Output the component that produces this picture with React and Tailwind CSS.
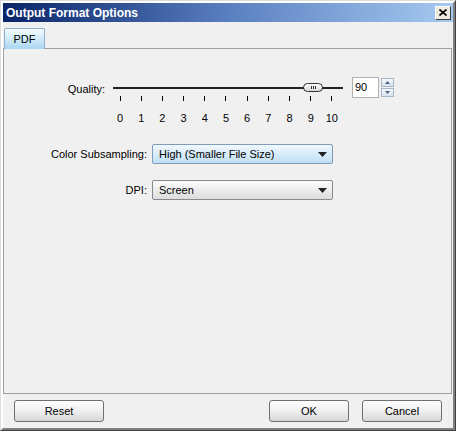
import React from "react";

function Ticks() {
  const nums = [0, 1, 2, 3, 4, 5, 6, 7, 8, 9, 10];
  return (
    <div className="flex justify-between w-[222px]">
      {nums.map((n) => (
        <div key={n} className="flex flex-col items-center w-[10px]">
          <div className="w-px h-[5px] bg-[#000]" />
          <div className="mt-[11px] text-[11px] leading-[12px] text-black">{n}</div>
        </div>
      ))}
    </div>
  );
}

function Combo({ text, blue }) {
  return (
    <div
      className={
        "w-[181px] h-[20px] border rounded-[2px] flex items-center justify-between pl-[6px] pr-[5px] " +
        (blue
          ? "border-[#7f9db9] bg-gradient-to-b from-[#f2f8fd] via-[#d8ecfa] to-[#bfdff5]"
          : "bg-gradient-to-b from-[#fbfbfb] via-[#ececec] to-[#dcdcdc] border-[#8a8a8a]")
      }
    >
      <span className="text-[11px] leading-none text-black">{text}</span>
      <svg width="9" height="5" viewBox="0 0 9 5">
        <path d="M0 0 H9 L4.5 5 Z" fill="#222" />
      </svg>
    </div>
  );
}

function Btn({ children, w }) {
  return (
    <div
      className={
        "h-[22px] border border-[#707070] rounded-[3px] bg-gradient-to-b from-[#fdfdfd] via-[#efefef] to-[#d6d6d6] flex items-center justify-center text-[11px] text-black " +
        w
      }
    >
      {children}
    </div>
  );
}

export default function App() {
  return (
    <div
      className="w-[456px] h-[431px] bg-[#f0f0f0] border border-t-[#dcdcdc] border-l-[#dcdcdc] border-r-[#404040] border-b-[#404040] flex flex-col"
      style={{ fontFamily: '"Liberation Sans", Arial, sans-serif' }}
    >
      <div className="border-[2px] border-t-[#ffffff] border-l-[#ffffff] border-r-[#808080] border-b-[#808080] flex flex-col flex-1 min-h-0">
        {/* Title bar */}
        <div className="h-[19px] bg-gradient-to-r from-[#0a246a] via-[#5a7fc0] to-[#a6caf0] flex items-center justify-between pl-[3px] pr-[2px]">
          <span className="text-white font-bold text-[12px] leading-none">Output Format Options</span>
          <div className="w-[16px] h-[14px] bg-[#ece9e0] border border-t-[#fff] border-l-[#fff] border-r-[#404040] border-b-[#404040] flex items-center justify-center">
            <svg width="8" height="7" viewBox="0 0 8 7">
              <path d="M0.5 0.5 L7.5 6.5 M7.5 0.5 L0.5 6.5" stroke="#000" strokeWidth="1.6" />
            </svg>
          </div>
        </div>

        {/* Tabs */}
        <div className="flex flex-col flex-1 min-h-0 px-0 pt-[6px]">
          <div className="flex pl-[1px]">
            <div className="w-[41px] h-[21px] border border-b-0 border-[#8fb0c8] rounded-t-[2px] bg-gradient-to-b from-[#f4fbff] via-[#cfeaf9] to-[#a9d6f1] flex items-center justify-center text-[11px] text-black -mb-px relative">
              PDF
            </div>
          </div>
          <div className="h-[346px] border border-[#a0a0a0] mr-[1px] flex flex-col">
            {/* Quality row */}
            <div className="flex items-start mt-[28px]">
              <div className="w-[103px] text-right pr-[2px] text-[11px] leading-none mt-[7px]">Quality:</div>
              <div className="ml-[6px] flex flex-col w-[230px]">
                <div className="relative h-[14px] flex items-center mt-[4px]">
                  <div className="w-full h-[2px] bg-[#222]" />
                  <div className="absolute left-[190px] top-[2px] w-[20px] h-[9px] rounded-[5px] border border-[#333] bg-gradient-to-b from-[#ffffff] to-[#d8d8d8] flex items-center justify-center gap-[1px]">
                    <div className="w-px h-[3px] bg-[#333]" />
                    <div className="w-px h-[3px] bg-[#333]" />
                    <div className="w-px h-[3px] bg-[#333]" />
                  </div>
                </div>
                <div className="pl-[2px] mt-[1px]">
                  <Ticks />
                </div>
              </div>
              <div className="ml-[9px] flex items-start">
                <div className="w-[27px] h-[21px] bg-white border border-[#b0b0b0] flex items-center pl-[2px] text-[11px]">90</div>
                <div className="ml-[2px] flex flex-col gap-[1px] mt-[1px]">
                  <div className="w-[13px] h-[9px] border border-[#a5b7c9] bg-gradient-to-b from-[#f4f8fc] to-[#d5e2ee] flex items-center justify-center">
                    <svg width="5" height="3" viewBox="0 0 5 3"><path d="M0 3 H5 L2.5 0 Z" fill="#4d6185" /></svg>
                  </div>
                  <div className="w-[13px] h-[9px] border border-[#a5b7c9] bg-gradient-to-b from-[#f4f8fc] to-[#d5e2ee] flex items-center justify-center">
                    <svg width="5" height="3" viewBox="0 0 5 3"><path d="M0 0 H5 L2.5 3 Z" fill="#4d6185" /></svg>
                  </div>
                </div>
              </div>
            </div>

            {/* Color subsampling */}
            <div className="flex items-center mt-[20px]">
              <div className="w-[143px] text-right text-[11px] leading-none">Color Subsampling:</div>
              <div className="ml-[5px]">
                <Combo text="High (Smaller File Size)" blue />
              </div>
            </div>

            {/* DPI */}
            <div className="flex items-center mt-[16px]">
              <div className="w-[143px] text-right text-[11px] leading-none">DPI:</div>
              <div className="ml-[5px]">
                <Combo text="Screen" />
              </div>
            </div>
          </div>

          {/* Buttons */}
          <div className="flex items-center justify-between pl-[11px] pr-[11px] mt-[6px]">
            <Btn w="w-[90px]">Reset</Btn>
            <div className="flex gap-[13px]">
              <Btn w="w-[80px]">OK</Btn>
              <Btn w="w-[80px]">Cancel</Btn>
            </div>
          </div>
        </div>
      </div>
    </div>
  );
}
